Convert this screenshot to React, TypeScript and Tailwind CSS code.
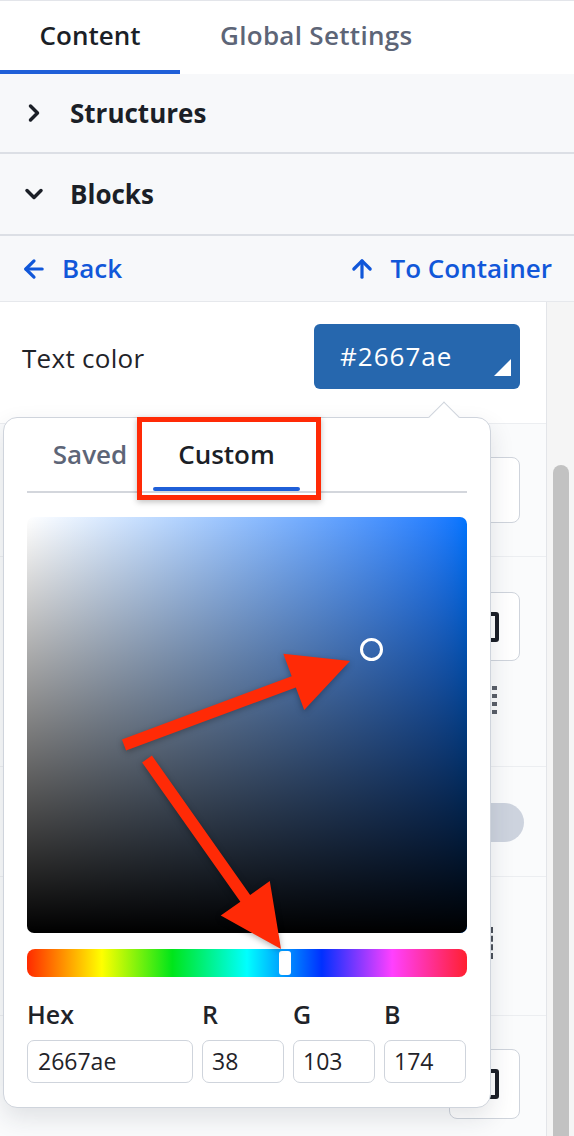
import React from 'react';
import { ChevronRight, ChevronDown, ArrowLeft, ArrowUp } from 'lucide-react';

// polygon for an annotation arrow, tail -> tip
const arrowPoints = (x1: number, y1: number, x2: number, y2: number, sw: number, hw: number, hl: number) => {
  const dx = x2 - x1;
  const dy = y2 - y1;
  const len = Math.hypot(dx, dy);
  const ux = dx / len;
  const uy = dy / len;
  const px = -uy;
  const py = ux;
  const bx = x2 - ux * hl;
  const by = y2 - uy * hl;
  const pts = [
    [x1 + (px * sw) / 2, y1 + (py * sw) / 2],
    [bx + (px * sw) / 2, by + (py * sw) / 2],
    [bx + (px * hw) / 2, by + (py * hw) / 2],
    [x2, y2],
    [bx - (px * hw) / 2, by - (py * hw) / 2],
    [bx - (px * sw) / 2, by - (py * sw) / 2],
    [x1 - (px * sw) / 2, y1 - (py * sw) / 2],
  ];
  return pts.map((p) => p.join(',')).join(' ');
};

const Bracket: React.FC = () => (
  <div className="w-[28px] h-[30px] border-[4px] border-[#1b1f27] rounded-[3px]" />
);

const App: React.FC = () => {
  return (
    <div className="relative w-[574px] h-[1136px] overflow-hidden bg-white font-['Open_Sans',sans-serif] text-[#1f2329]">
      {/* Top tabs */}
      <div className="flex h-[74px] border-t border-[#e3e5ea] bg-white">
        <div className="w-[180px] flex flex-col">
          <div className="flex-1 flex items-center justify-center text-[26px] font-semibold text-[#1b1f27]">Content</div>
          <div className="h-[4px] bg-[#1f5fd8]" />
        </div>
        <div className="px-[40px] flex items-center pb-[4px] text-[26px] font-semibold text-[#5d6577] tracking-[0.3px]">Global Settings</div>
      </div>

      {/* Accordion rows */}
      <div className="h-[80px] bg-[#f7f8fa] border-b-2 border-[#dcdfe5] flex items-center pl-[20px]">
        <ChevronRight size={28} strokeWidth={3} className="text-[#1b1f27]" />
        <span className="ml-[22px] text-[26px] font-bold text-[#1b1f27]">Structures</span>
      </div>
      <div className="h-[82px] bg-[#f7f8fa] border-b-2 border-[#dcdfe5] flex items-center pl-[20px]">
        <ChevronDown size={28} strokeWidth={3} className="text-[#1b1f27]" />
        <span className="ml-[22px] text-[26px] font-bold text-[#1b1f27]">Blocks</span>
      </div>
      <div className="h-[66px] bg-[#f7f8fa] border-b border-[#e6e8ec] flex items-center justify-between pl-[20px] pr-[22px] text-[#1157d9]">
        <div className="flex items-center gap-[14px]">
          <ArrowLeft size={28} strokeWidth={2.75} />
          <span className="text-[26px] font-semibold">Back</span>
        </div>
        <div className="flex items-center gap-[14px]">
          <ArrowUp size={28} strokeWidth={2.75} />
          <span className="text-[26px] font-semibold">To Container</span>
        </div>
      </div>

      {/* Body */}
      <div className="flex">
        <div className="w-[547px] border-r border-[#e3e5e9]">
          <div className="h-[122px] flex justify-between bg-white border-b border-[#eceef1] pl-[22px] pr-[26px]">
            <span className="mt-[37px] text-[26px] tracking-[0.3px]">Text color</span>
            <button className="relative mt-[22px] w-[206px] h-[65px] rounded-[6px] bg-[#2667ae] flex items-center pl-[26px] text-white text-[26px] font-medium tracking-[1px]">
              #2667ae
              <svg className="absolute right-[9px] bottom-[13px]" width="17" height="17" viewBox="0 0 17 17">
                <polygon points="17,0 17,17 0,17" fill="#fff" />
              </svg>
            </button>
          </div>
          <div className="h-[133px] flex justify-end bg-[#fafbfc] border-b border-[#eceef1] pr-[26px]">
            <div className="mt-[33px] w-[71px] h-[66px] bg-white border border-[#cfd4dc] rounded-[8px]" />
          </div>
          <div className="h-[210px] flex flex-col items-end bg-[#fafbfc] border-b border-[#eceef1] pr-[26px]">
            <div className="mt-[35px] w-[71px] h-[69px] bg-white border border-[#cfd4dc] rounded-[8px] flex items-center justify-center">
              <Bracket />
            </div>
            <div className="mt-[25px] mr-[23px] flex flex-col gap-[4px]">
              <div className="w-[5px] h-[4px] bg-[#5a5f69]" />
              <div className="w-[5px] h-[4px] bg-[#5a5f69]" />
              <div className="w-[5px] h-[4px] bg-[#5a5f69]" />
              <div className="w-[5px] h-[4px] bg-[#5a5f69]" />
            </div>
          </div>
          <div className="h-[110px] flex justify-end bg-[#fafbfc] border-b border-[#eceef1] pr-[22px]">
            <div className="mt-[36px] w-[66px] h-[39px] rounded-full bg-[#cdd3de]" />
          </div>
          <div className="h-[139px] flex justify-end bg-[#fafbfc] border-b border-[#eceef1] pr-[53px]">
            <div className="mt-[50px] h-[32px] border-l-2 border-dashed border-[#4b505a]" />
          </div>
          <div className="h-[140px] flex justify-end bg-[#fafbfc] pr-[26px]">
            <div className="mt-[33px] w-[71px] h-[70px] bg-white border border-[#cfd4dc] rounded-[8px] flex items-center justify-center">
              <Bracket />
            </div>
          </div>
        </div>
        {/* Scrollbar */}
        <div className="flex-1 bg-[#f5f5f5] flex justify-center">
          <div className="mt-[163px] w-[16px] h-[700px] rounded-t-full bg-[#c2c2c2]" />
        </div>
      </div>

      {/* Colour picker popover */}
      <div className="absolute left-[3px] top-[417px] w-[488px] h-[691px] bg-white border border-[#cfd4dc] rounded-[14px] shadow-[0_10px_24px_rgba(30,40,60,0.12)] px-[23px]">
        <div className="absolute left-[429px] top-[-12px] w-[22px] h-[22px] rotate-45 bg-white border-l border-t border-[#cfd4dc]" />
        <div className="relative flex h-[75px] border-b-2 border-[#d3d6dc]">
          <div className="w-[126px] flex items-center justify-center text-[26px] font-semibold text-[#5d6577]">Saved</div>
          <div className="relative w-[147px] flex items-center justify-center text-[26px] font-semibold text-[#1b1f27]">
            Custom
            <div className="absolute left-0 right-0 bottom-[0px] h-[4px] rounded-full bg-[#1f5fd8]" />
          </div>
        </div>

        <div className="relative mt-[24px] h-[416px] rounded-[7px] overflow-hidden bg-linear-to-r from-white to-[#0074ff]">
          <div className="absolute inset-0 bg-linear-to-b from-transparent to-black" />
          <div className="absolute left-[333px] top-[121px] w-[23px] h-[23px] rounded-full border-[3px] border-white" />
        </div>

        <div className="relative mt-[16px] h-[28px] rounded-[8px] bg-[linear-gradient(to_right,#ff2a00_0%,#ffff00_17%,#00e51a_33%,#00ffff_50%,#0030ff_67%,#ff40ff_83%,#ff2030_100%)]">
          <div className="absolute left-[252px] top-[2px] w-[12px] h-[24px] rounded-[3px] bg-white" />
        </div>

        <div className="mt-[21px] grid grid-cols-[166px_82px_82px_82px] gap-x-[9px] gap-y-[9px]">
          <span className="text-[25px] font-semibold leading-[33px]">Hex</span>
          <span className="text-[25px] font-semibold leading-[33px]">R</span>
          <span className="text-[25px] font-semibold leading-[33px]">G</span>
          <span className="text-[25px] font-semibold leading-[33px]">B</span>
          <div className="h-[43px] border border-[#cfd4dc] rounded-[7px] flex items-center pl-[10px] text-[23px]">2667ae</div>
          <div className="h-[43px] border border-[#cfd4dc] rounded-[7px] flex items-center pl-[9px] text-[23px]">38</div>
          <div className="h-[43px] border border-[#cfd4dc] rounded-[7px] flex items-center pl-[9px] text-[23px]">103</div>
          <div className="h-[43px] border border-[#cfd4dc] rounded-[7px] flex items-center pl-[9px] text-[23px]">174</div>
        </div>
      </div>

      {/* Annotations */}
      <div className="absolute left-[137px] top-[417px] w-[184px] h-[83px] border-[5px] border-[#ff2a06] shadow-[0_2px_6px_rgba(0,0,0,0.25)]" />
      <svg className="absolute left-0 top-0 pointer-events-none drop-shadow-[0_2px_3px_rgba(0,0,0,0.3)]" width="574" height="1136">
        <polygon points={arrowPoints(124, 745, 350, 661, 12, 60, 60)} fill="#ff2a06" />
        <polygon points={arrowPoints(147, 759, 281, 949, 12, 60, 62)} fill="#ff2a06" />
      </svg>
    </div>
  );
};

export default App;
